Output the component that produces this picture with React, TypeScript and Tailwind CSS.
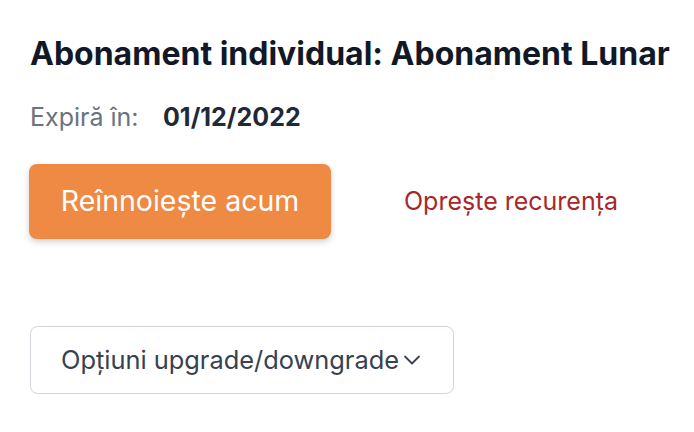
import React from "react";

function ChevronDown() {
  return (
    <svg
      width="20"
      height="20"
      viewBox="0 0 20 20"
      fill="none"
      stroke="currentColor"
      strokeWidth="1.8"
      strokeLinecap="round"
      strokeLinejoin="round"
    >
      <path d="M3 6.5l7 7 7-7" />
    </svg>
  );
}

export default function App() {
  return (
    <div
      className="bg-white w-[694px] h-[432px] pl-[30px] pt-[34px]"
      style={{ fontFamily: "Inter, 'Noto Sans', sans-serif" }}
    >
      {/* Header */}
      <h1 className="text-[32px] leading-[40px] font-bold text-[#111827] whitespace-nowrap">
        Abonament individual: Abonament Lunar
      </h1>

      <div className="flex items-center mt-[27px] text-[25px] leading-[32px]">
        <span className="text-[#6b7280] w-[133px]">Expiră în:</span>
        <span className="font-bold text-[#1f2937]">01/12/2022</span>
      </div>

      {/* Actions */}
      <div className="flex items-center mt-[31px] -ml-px">
        <button className="w-[302px] h-[75px] rounded-[8px] bg-[#ee8a43] text-white text-[28.5px] shadow-[0_3px_6px_rgba(0,0,0,0.18)]">
          Reînnoiește acum
        </button>
        <button className="ml-[73px] text-[25px] text-[#a8282a]">
          Oprește recurența
        </button>
      </div>

      <div className="mt-[87px]">
        <button className="w-[424px] h-[68px] rounded-[8px] border border-[#d1d5db] bg-white flex items-center pl-[30px] text-[25.4px] text-[#374151]">
          <span>Opțiuni upgrade/downgrade</span>
          <span className="ml-[3px]">
            <ChevronDown />
          </span>
        </button>
      </div>
    </div>
  );
}
